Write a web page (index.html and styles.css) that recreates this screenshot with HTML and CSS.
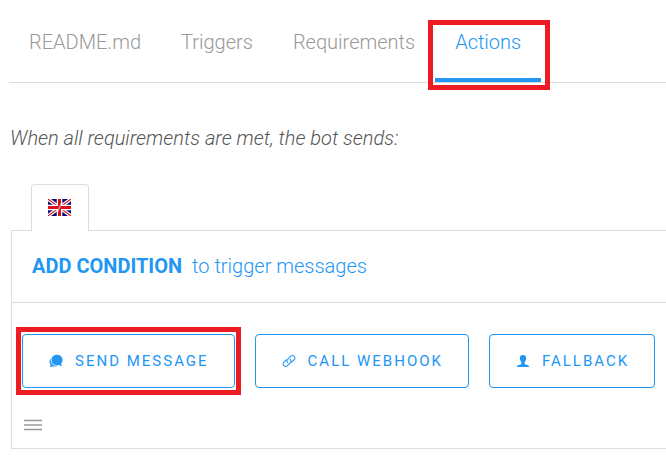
FILE: index.html
```
<!DOCTYPE html>
<html lang="en">
<head>
<meta charset="utf-8">
<title>Bot actions</title>
<link rel="stylesheet" href="styles.css">
</head>
<body>
<nav class="tabs">
  <a class="tab" href="#readme">README.md</a>
  <a class="tab" href="#triggers">Triggers</a>
  <a class="tab" href="#requirements">Requirements</a>
  <a class="tab tab-active marked" href="#actions" aria-current="page">Actions</a>
</nav>
<main class="content">
  <p class="intro">When all requirements are met, the bot sends:</p>
  <div class="languages">
    <button class="language" type="button" aria-label="English">
      <svg class="flag" viewBox="0 0 23 17" aria-hidden="true">
        <path fill="#0c0c70" d="M0 0h23v17H0z"/>
        <path stroke="#fff" stroke-width="3.500" d="M0 0l23 17M23 0L0 17"/>
        <path stroke="#d8101c" stroke-width="1.100" d="M0 0l23 17M23 0L0 17"/>
        <path stroke="#fff" stroke-width="5.500" d="M11.500 0v17M0 8.500h23"/>
        <path stroke="#d8101c" stroke-width="3" d="M11.500 0v17M0 8.500h23"/>
        <path stroke="#fff" stroke-opacity=".55" stroke-width="1.600" d="M9.500 13l4-9"/>
      </svg>
    </button>
  </div>
  <section class="panel">
    <div class="condition">
      <a class="condition-link" href="#condition"><strong>ADD CONDITION</strong><span>to trigger messages</span></a>
    </div>
    <div class="actions">
      <button class="action marked" type="button">
        <svg class="icon" viewBox="0 0 14 14" aria-hidden="true">
          <path fill="currentColor" d="M8 .8c3.200 0 5.500 2.200 5.500 5.100 0 1.700-.6 2.900-1.500 3.900l1.300 2.300c-1.300 0-2.400-.3-3.200-1-.7.200-1.400.3-2.100.3-3.200 0-5.500-2.300-5.500-5.400S4.800.8 8 .8z"/>
          <path fill="currentColor" d="M1.800 4.500C.6 5.900.2 7.700.8 9.300c.2.600.5 1.100.9 1.500L.8 13c1.200 0 2.200-.2 3-.7 1.500.5 3.100.4 4.400-.2-3.400-.1-6-2.500-6.500-5.400-.1-.8 0-1.500.1-2.200z"/>
        </svg>
        <span>SEND MESSAGE</span>
      </button>
      <button class="action" type="button">
        <svg class="icon" viewBox="0 0 14 14" aria-hidden="true">
          <g fill="none" stroke="currentColor" stroke-width="1.100" stroke-linecap="round">
            <path d="M5.700 8.600c-1-1-1-2.300-.1-3.200l3-3c1-1 2.600-1 3.600-.1s.9 2.500 0 3.400L9.700 8.200"/>
            <path d="M8.300 5.400c1 1 1 2.300.1 3.200l-3 3c-1 1-2.600 1-3.600.1s-.9-2.500 0-3.400l2.500-2.500"/>
          </g>
        </svg>
        <span>CALL WEBHOOK</span>
      </button>
      <button class="action" type="button">
        <svg class="icon" viewBox="0 0 14 14" aria-hidden="true">
          <path fill="currentColor" d="M7 1c2 0 3.200 1.300 3.200 3 0 1.500-.6 3-1.500 3.900v1.700c0 .7.600 1 1.500 1.200 1.600.3 2.800.8 3 2.200H.8c.2-1.400 1.400-1.900 3-2.200.9-.2 1.500-.5 1.500-1.200V7.900C4.400 7 3.800 5.500 3.800 4 3.800 2.300 5 1 7 1z"/>
        </svg>
        <span>FALLBACK</span>
      </button>
    </div>
    <button class="menu" type="button" aria-label="Reorder">
      <svg class="menu-icon" viewBox="0 0 18 12" aria-hidden="true">
        <path stroke="currentColor" stroke-width="1.300" d="M0 1.500h18M0 6h18M0 10.500h18"/>
      </svg>
    </button>
  </section>
</main>
</body>
</html>
```
FILE: styles.css
```
* {
  box-sizing: border-box;
}

body {
  margin: 0;
  background: #fff;
  color: #555;
  font: 300 20px/24px Roboto, sans-serif;
  overflow-x: hidden;
}

a {
  color: inherit;
  text-decoration: none;
}

button {
  margin: 0;
  background: none;
  color: inherit;
  font: inherit;
}

svg {
  display: block;
}

.tabs {
  display: flex;
  margin-left: 9px;
  padding-top: 10px;
  border-bottom: 1px solid #ddd;
  color: #999;
}

.tab {
  padding: 20px 20px 24px;
  border-bottom: 4px solid transparent;
}

.tab-active {
  border-color: #2196f3;
  color: #2196f3;
}

.marked {
  position: relative;
}

.marked::after {
  content: "";
  position: absolute;
  inset: -8px -7px -8px -7px;
  border: 5px solid #ed1c24;
  pointer-events: none;
}

.tab-active::after {
  inset: 10px -9px -12px -7px;
}

.content {
  padding-left: 10px;
}

.intro {
  margin: 43px 0 34px;
  font-style: italic;
}

.languages {
  display: flex;
  padding-left: 21px;
}

.language {
  position: relative;
  z-index: 1;
  margin-bottom: -1px;
  padding: 14px 17px 15px 16px;
  border: 1px solid #ddd;
  border-bottom: 0;
  border-radius: 4px 4px 0 0;
  background: #fff;
}

.flag {
  width: 23px;
  height: 17px;
}

.panel {
  margin-left: 1px;
  border: 1px solid #ddd;
  border-right: 0;
}

.condition {
  padding: 23px 20px 24px;
  border-bottom: 1px solid #ddd;
  color: #2196f3;
}

.condition-link {
  display: flex;
  gap: 10px;
}

.condition strong {
  font-weight: 700;
}

.actions {
  display: flex;
  gap: 20px;
  padding: 31px 10px 0;
}

.action {
  display: flex;
  flex: none;
  align-items: center;
  gap: 12px;
  padding: 14px 25px 14px 26px;
  border: 1px solid #2196f3;
  border-radius: 4px;
  color: #2196f3;
  font-size: 15px;
  font-weight: 400;
  letter-spacing: 2px;
}

.icon {
  width: 14px;
  height: 14px;
}

.menu {
  display: block;
  margin: 25px 0 11px 6px;
  padding: 6px;
  border: 0;
  color: #999;
}

.menu-icon {
  width: 18px;
  height: 12px;
}
```
